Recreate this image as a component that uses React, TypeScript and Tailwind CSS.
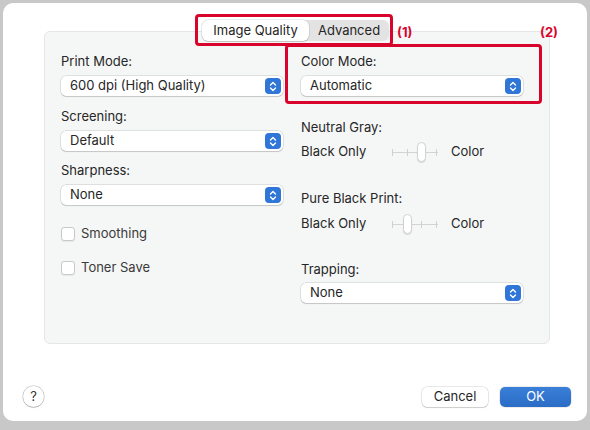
import React from "react";

const font = { fontFamily: "Inter, 'Liberation Sans', sans-serif" };

const Stepper = () => (
  <span className="flex h-4 w-4 items-center justify-center rounded-[4px] bg-[#2f76d8]">
    <svg width="8" height="11" viewBox="0 0 8 11" fill="none">
      <path d="M1.5 4L4 1.5L6.5 4" stroke="white" strokeWidth="1.4" strokeLinecap="round" strokeLinejoin="round" />
      <path d="M1.5 7L4 9.5L6.5 7" stroke="white" strokeWidth="1.4" strokeLinecap="round" strokeLinejoin="round" />
    </svg>
  </span>
);

const Popup = ({ value }: { value: string }) => (
  <div className="flex h-5 w-[222px] items-center justify-between rounded-[5px] bg-white pl-[9px] pr-[2px] text-[13px] text-[#262626] shadow-[0_0_0_0.5px_rgba(0,0,0,0.18),0_1px_1px_rgba(0,0,0,0.12)]">
    <span>{value}</span>
    <Stepper />
  </div>
);

const Label = ({ children, className = "" }: { children: React.ReactNode; className?: string }) => (
  <div className={`h-4 text-[13px] leading-4 text-[#262626] ${className}`}>{children}</div>
);

const Checkbox = ({ label, className = "" }: { label: string; className?: string }) => (
  <div className={`flex h-4 items-center gap-[6px] ${className}`}>
    <span className="h-[14px] w-[14px] rounded-[3px] border border-[#c9c9c9] bg-white shadow-[0_1px_1px_rgba(0,0,0,0.06)]" />
    <span className="text-[13px] text-[#3a3a3a]">{label}</span>
  </div>
);

// four-stop slider, thumb sits on one of the ticks
const Slider = ({ pos }: { pos: number }) => {
  const ticks = [0, 15, 29, 44];
  return (
    <div className="relative h-5 w-[46px]">
      <div className="absolute left-0 right-0 top-[10px] h-px bg-[#d4d4d4]" />
      {ticks.map(t => (
        <div key={t} className="absolute top-[7px] h-[7px] w-px bg-[#cfcfcf]" style={{ left: t }} />
      ))}
      <div
        className="absolute top-0 h-5 w-[9px] rounded-full border border-[#d2d2d2] bg-white shadow-[0_1px_1px_rgba(0,0,0,0.12)]"
        style={{ left: ticks[pos] - 4 }}
      />
    </div>
  );
};

const SliderRow = ({ pos, className = "" }: { pos: number; className?: string }) => (
  <div className={`flex h-5 items-center text-[13px] text-[#262626] ${className}`}>
    <span className="w-[91px]">Black Only</span>
    <Slider pos={pos} />
    <span className="ml-[13px]">Color</span>
  </div>
);

export default function App() {
  return (
    <div className="h-[430px] w-[590px] bg-[#c8c8c8] pl-[3px] pr-[3px] pt-[3px]" style={font}>
      <div className="relative flex h-[418px] flex-col rounded-[10px] bg-white">
        {/* settings group */}
        <div className="relative ml-[41px] mt-[28px] h-[313px] w-[506px] rounded-[6px] border border-[#e6e6e6] bg-[#f5f6f6]">
          {/* tab switcher on the group edge */}
          <div className="absolute left-[157px] top-[-12px] flex h-[21px] w-[187px] rounded-[6px] bg-[#e3e3e3] text-[13px] text-[#262626]">
            <div className="flex w-[107px] items-center justify-center rounded-[6px] bg-white shadow-[0_0_0_0.5px_rgba(0,0,0,0.15),0_1px_1px_rgba(0,0,0,0.15)]">
              Image Quality
            </div>
            <div className="flex flex-1 items-center justify-center">Advanced</div>
          </div>

          <div className="flex gap-[18px] pl-[16px] pt-[21px]">
            <div className="flex w-[222px] flex-col">
              <Label>Print Mode:</Label>
              <div className="mt-[7px]">
                <Popup value="600 dpi (High Quality)" />
              </div>
              <Label className="mt-[12px]">Screening:</Label>
              <div className="mt-[7px]">
                <Popup value="Default" />
              </div>
              <Label className="mt-[11px]">Sharpness:</Label>
              <div className="mt-[7px]">
                <Popup value="None" />
              </div>
              <Checkbox label="Smoothing" className="mt-[21px]" />
              <Checkbox label="Toner Save" className="mt-[18px]" />
            </div>

            <div className="flex w-[222px] flex-col">
              <Label>Color Mode:</Label>
              <div className="mt-[7px]">
                <Popup value="Automatic" />
              </div>
              <Label className="mt-[23px]">Neutral Gray:</Label>
              <SliderRow pos={2} className="mt-[7px]" />
              <Label className="mt-[28px]">Pure Black Print:</Label>
              <SliderRow pos={1} className="mt-[8px]" />
              <Label className="mt-[27px]">Trapping:</Label>
              <div className="mt-[6px]">
                <Popup value="None" />
              </div>
            </div>
          </div>
        </div>

        {/* footer buttons */}
        <div className="mt-[42px] flex items-center pl-[20px] pr-[16px] text-[13px]">
          <div className="flex h-[21px] w-[21px] items-center justify-center rounded-full bg-white text-[13px] text-[#333] shadow-[0_0_0_0.5px_rgba(0,0,0,0.25),0_1px_1px_rgba(0,0,0,0.15)]">
            ?
          </div>
          <div className="ml-auto flex h-5 w-[66px] items-center justify-center rounded-[5px] bg-white text-[#262626] shadow-[0_0_0_0.5px_rgba(0,0,0,0.18),0_1px_1px_rgba(0,0,0,0.12)]">
            Cancel
          </div>
          <div className="ml-[12px] flex h-5 w-[71px] items-center justify-center rounded-[5px] bg-gradient-to-b from-[#3a7fd8] to-[#2a6cc6] text-white shadow-[0_0_0_0.5px_rgba(0,0,0,0.15)]">
            OK
          </div>
        </div>

        {/* callout marks */}
        <div className="absolute left-[192px] top-[11px] h-[32px] w-[198px] rounded-[4px] border-[3px] border-[#d9042b]" />
        <div className="absolute left-[282px] top-[41px] h-[60px] w-[257px] rounded-[4px] border-[3px] border-[#d9042b]" />
        <div className="absolute left-[394px] top-[20px] text-[13px] font-bold text-[#d9042b]">(1)</div>
        <div className="absolute left-[537px] top-[20px] text-[13px] font-bold text-[#d9042b]">(2)</div>
      </div>
    </div>
  );
}
